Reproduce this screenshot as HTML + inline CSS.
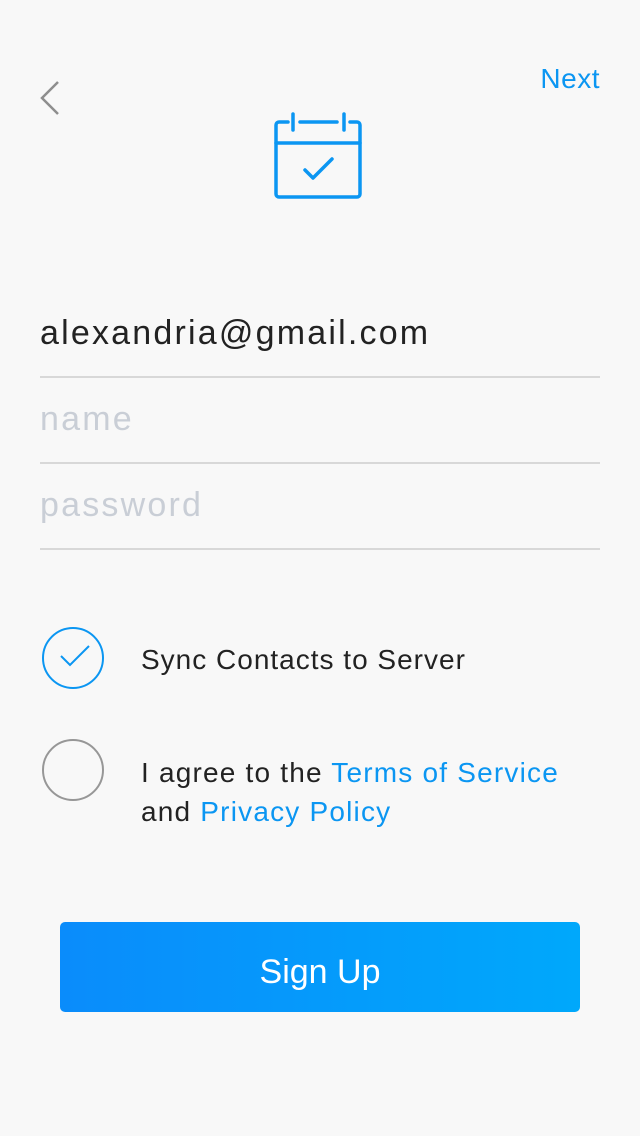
<!DOCTYPE html>
<html><head><meta charset="utf-8"><style>
body{margin:0;width:640px;height:1136px;background:#f8f8f8;font-family:"Liberation Sans",sans-serif;position:relative;overflow:hidden}
.a{position:absolute}
.field{position:absolute;left:40px;width:560px;border-bottom:2px solid #d8d8d8;font-size:34px;letter-spacing:2.2px}
.blue{color:#0b96f2}
</style></head><body>
<svg class="a" style="left:38px;top:80px" width="24" height="38"><path d="M20 2 L4 18 L20 34" fill="none" stroke="#8e8e8e" stroke-width="2.5"/></svg>
<div class="a blue" style="right:40px;top:63px;font-size:28px;letter-spacing:0.5px">Next</div>
<svg class="a" style="left:270px;top:108px" width="100" height="96" fill="none" stroke="#0b96f2" stroke-width="3.5" stroke-linecap="round" stroke-linejoin="round">
<path d="M18 14 H9 a3 3 0 0 0 -3 3 V86 a3 3 0 0 0 3 3 H87 a3 3 0 0 0 3 -3 V17 a3 3 0 0 0 -3 -3 H80"/>
<path d="M30 14 H67"/><path d="M23 6 V22"/><path d="M74 6 V22"/><path d="M6 35 H90"/>
<path d="M35 62 L43 70 L62 51"/></svg>
<div class="field" style="top:314px;height:62px;color:#222">alexandria@gmail.com</div>
<div class="field" style="top:400px;height:62px;color:#c9ced6">name</div>
<div class="field" style="top:486px;height:62px;color:#c9ced6">password</div>
<svg class="a" style="left:40px;top:625px" width="68" height="68"><circle cx="33" cy="33" r="30" fill="none" stroke="#0b96f2" stroke-width="2"/><path d="M21 31 L30 40 L49 21" fill="none" stroke="#0b96f2" stroke-width="2"/></svg>
<div class="a" style="left:141px;top:644px;font-size:28px;color:#222;letter-spacing:1px">Sync Contacts to Server</div>
<svg class="a" style="left:40px;top:737px" width="68" height="68"><circle cx="33" cy="33" r="30" fill="none" stroke="#979797" stroke-width="2"/></svg>
<div class="a" style="left:141px;top:753px;font-size:28px;color:#222;line-height:39px;letter-spacing:1.2px">I agree to the <span class="blue">Terms of Service</span><br>and <span class="blue">Privacy Policy</span></div>
<div class="a" style="left:60px;top:922px;width:520px;height:90px;border-radius:5px;background:linear-gradient(90deg,#0a8cfb,#00a8fb);color:#fff;font-size:34px;text-align:center;line-height:100px">Sign Up</div>
</body></html>
